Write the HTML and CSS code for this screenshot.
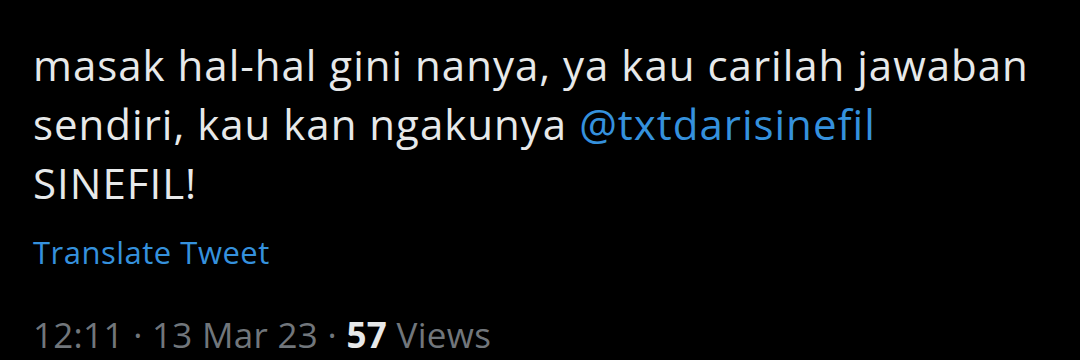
FILE: index.html
```html
<!DOCTYPE html>
<html lang="id">
<head>
    <meta charset="UTF-8">
    <title>Tweet</title>
    <link rel="stylesheet" href="styles.css">
</head>
<body>
    <div class="tweet">
        <p class="tweet-text">masak hal-hal gini nanya, ya kau carilah jawaban<br>sendiri, kau kan ngakunya <span class="mention">@txtdarisinefil</span><br>SINEFIL!</p>
        <div class="translate">Translate Tweet</div>
        <div class="meta">12:11 · 13 Mar 23 · <strong>57</strong> Views</div>
    </div>
</body>
</html>
```
FILE: styles.css
```css
body {
    margin: 0;
    background: #000;
    font-family: "Open Sans", "Noto Sans", sans-serif;
}

.tweet {
    width: 1047px;
    padding: 35px 0 0 33px;
}

.tweet-text {
    margin: 0;
    color: #e7e9ea;
    font-size: 42px;
    line-height: 59px;
    letter-spacing: 1px;
}

.mention {
    color: #3591dd;
}

.translate {
    margin-top: 20px;
    color: #3591dd;
    font-size: 31px;
    line-height: 40px;
    letter-spacing: 0.5px;
}

.meta {
    margin-top: 43px;
    color: #71767b;
    font-size: 35px;
    line-height: 40px;
    letter-spacing: 0.3px;
}

.meta strong {
    color: #e7e9ea;
}
```
